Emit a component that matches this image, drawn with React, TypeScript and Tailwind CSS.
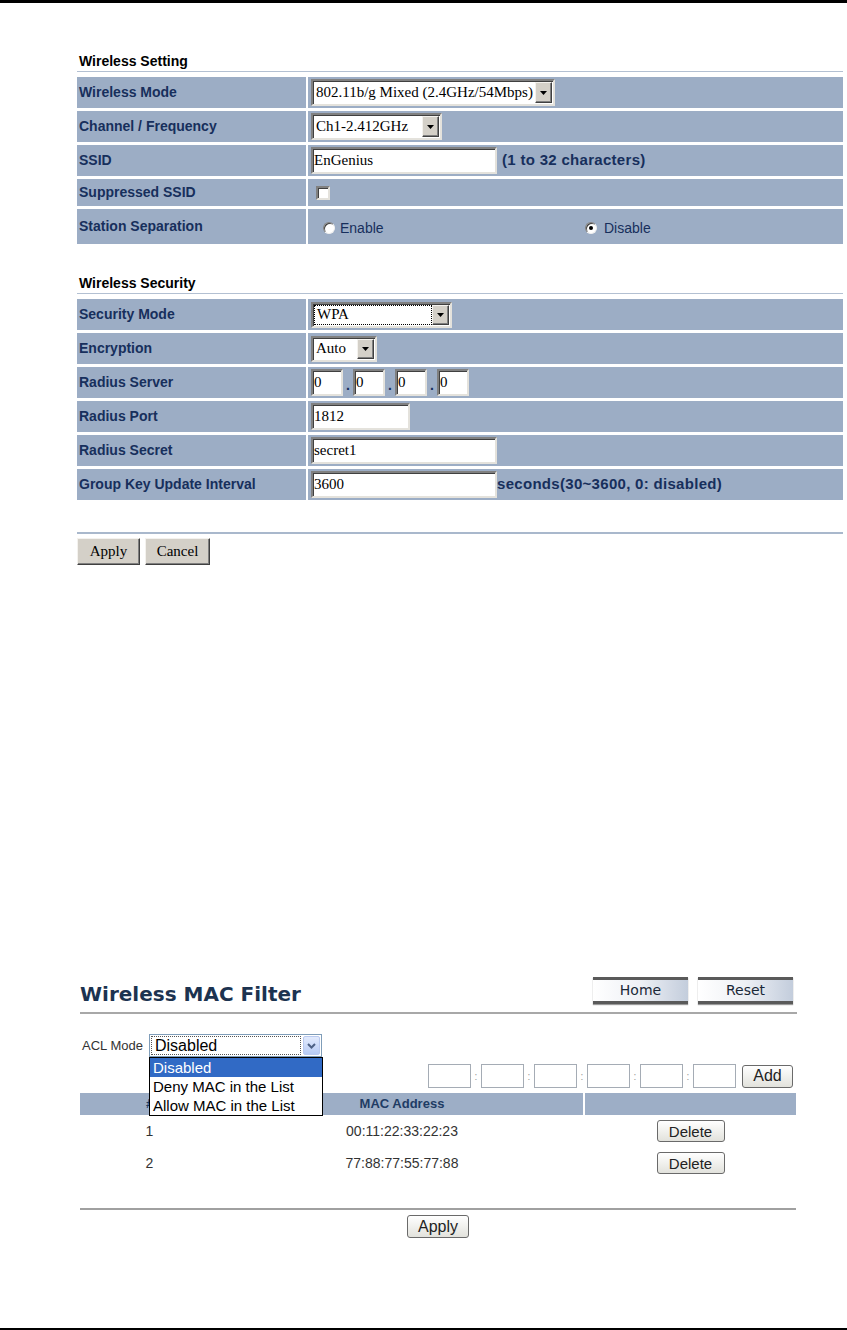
import React from 'react';

const sunken =
  'bg-white border-2 border-t-[#808080] border-l-[#808080] border-r-[#e4e2dc] border-b-[#e4e2dc] shadow-[inset_1px_1px_0_#404040]';
const label = 'bg-[#9cadc5] flex items-center pl-[2px] font-bold text-[14px] text-[#172f5c]';
const value = 'bg-[#9cadc5] flex items-center';
const serif = "font-['Liberation_Serif',serif] text-[15px] text-black";

const DropArrow = () => (
  <span className="flex h-full w-[17px] shrink-0 items-center justify-center bg-[#d4d0c8] border border-t-[#f4f2ee] border-l-[#f4f2ee] border-r-[#404040] border-b-[#404040] shadow-[inset_-1px_-1px_0_#808080]">
    <svg width="7" height="4" viewBox="0 0 7 4">
      <path d="M0 0h7L3.5 4z" fill="#000" />
    </svg>
  </span>
);

const ClassicSelect = ({ text, w, h = 'h-[27px]', focus = false }: { text: string; w: string; h?: string; focus?: boolean }) => (
  <div className={`${sunken} ${w} ${h} flex items-stretch p-[1px]`}>
    <span className={`flex-1 flex items-center pl-[2px] ${serif} ${focus ? 'border border-dotted border-black' : ''}`}>{text}</span>
    <DropArrow />
  </div>
);

const TextBox = ({ text, w }: { text: string; w: string }) => (
  <div className={`${sunken} ${w} h-[27px] flex items-center pl-[1px] ${serif}`}>{text}</div>
);

const Radio = ({ checked }: { checked?: boolean }) => (
  <span className="flex h-[12px] w-[12px] items-center justify-center rounded-full bg-white border border-t-[#808080] border-l-[#808080] border-r-[#f0f0f0] border-b-[#f0f0f0] shadow-[inset_1px_1px_0_#404040]">
    {checked && <span className="h-[4px] w-[4px] rounded-full bg-black" />}
  </span>
);

const Title = ({ children }: { children: React.ReactNode }) => (
  <div className="pl-[2px] pb-[2px] text-[14px] leading-[15px] font-bold text-black border-b border-[#b3c0d2]">{children}</div>
);

const ClassicButton = ({ children, w }: { children: React.ReactNode; w: string }) => (
  <button
    className={`${w} h-[27px] bg-[#d4d0c8] border border-t-[#f4f2ee] border-l-[#f4f2ee] border-r-[#404040] border-b-[#404040] shadow-[inset_-1px_-1px_0_#808080] ${serif}`}
  >
    {children}
  </button>
);

const XPButton = ({ children, w, h = 'h-[22px]' }: { children: React.ReactNode; w: string; h?: string }) => (
  <button className={`${w} ${h} rounded-[3px] border border-[#6a6a6a] bg-gradient-to-b from-white to-[#e2e2dc] text-[15px] text-[#222] leading-none`}>
    {children}
  </button>
);

const NavButton = ({ children }: { children: React.ReactNode }) => (
  <button className="w-[95px] h-[27px] border-t-[3px] border-b-[3px] border-[#5a5a5a] bg-gradient-to-r from-white via-[#eef0f5] to-[#c3cddc] shadow-[0_1px_1px_#9a9a9a] font-['DejaVu_Sans',sans-serif] text-[14px] text-[#1a2838]">
    {children}
  </button>
);

export default function App() {
  return (
    <div className="w-[847px] h-[1330px] flex flex-col bg-white font-['Liberation_Sans',Arial,sans-serif]">
      <div className="h-[3px] bg-black" />

      <div className="ml-[77px] w-[766px]">
        {/* Wireless Setting */}
        <div className="mt-[51px]">
          <Title>Wireless Setting</Title>
        </div>
        <div className="mt-[5px] flex flex-col gap-[3px]">
          <div className="grid grid-cols-[229px_1fr] gap-x-[2px] h-[31px]">
            <div className={label}>Wireless Mode</div>
            <div className={`${value} pl-[3px]`}>
              <ClassicSelect text="802.11b/g Mixed (2.4GHz/54Mbps)" w="w-[244px]" />
            </div>
          </div>
          <div className="grid grid-cols-[229px_1fr] gap-x-[2px] h-[31px]">
            <div className={label}>Channel / Frequency</div>
            <div className={`${value} pl-[3px]`}>
              <ClassicSelect text="Ch1-2.412GHz" w="w-[131px]" />
            </div>
          </div>
          <div className="grid grid-cols-[229px_1fr] gap-x-[2px] h-[31px]">
            <div className={label}>SSID</div>
            <div className={`${value} pl-[3px]`}>
              <TextBox text="EnGenius" w="w-[186px]" />
              <span className="ml-[5px] font-bold text-[15px] tracking-[0.3px] text-[#172f5c]">(1 to 32 characters)</span>
            </div>
          </div>
          <div className="grid grid-cols-[229px_1fr] gap-x-[2px] h-[27px]">
            <div className={label}>Suppressed SSID</div>
            <div className={`${value} pl-[8px]`}>
              <span className={`${sunken} block w-[14px] h-[14px]`} />
            </div>
          </div>
          <div className="grid grid-cols-[229px_1fr] gap-x-[2px] h-[35px]">
            <div className={label}>Station Separation</div>
            <div className={`${value} pl-[15px] text-[14px] text-[#172f5c]`}>
              <span className="w-[262px] flex items-center gap-[5px] pt-[3px]">
                <Radio />
                Enable
              </span>
              <span className="flex items-center gap-[7px] pt-[3px]">
                <Radio checked />
                Disable
              </span>
            </div>
          </div>
        </div>

        {/* Wireless Security */}
        <div className="mt-[32px]">
          <Title>Wireless Security</Title>
        </div>
        <div className="mt-[5px] flex flex-col gap-[3px]">
          <div className="grid grid-cols-[229px_1fr] gap-x-[2px] h-[31px]">
            <div className={label}>Security Mode</div>
            <div className={`${value} pl-[3px]`}>
              <ClassicSelect text="WPA" w="w-[141px]" h="h-[26px]" focus />
            </div>
          </div>
          <div className="grid grid-cols-[229px_1fr] gap-x-[2px] h-[31px]">
            <div className={label}>Encryption</div>
            <div className={`${value} pl-[3px]`}>
              <ClassicSelect text="Auto" w="w-[66px]" h="h-[26px]" />
            </div>
          </div>
          <div className="grid grid-cols-[229px_1fr] gap-x-[2px] h-[31px]">
            <div className={label}>Radius Server</div>
            <div className={`${value} pl-[3px]`}>
              {[0, 1, 2, 3].map((i) => (
                <React.Fragment key={i}>
                  {i > 0 && <span className="w-[10px] text-center font-bold text-[14px] text-[#172f5c] pt-[6px]">.</span>}
                  <TextBox text="0" w="w-[32px]" />
                </React.Fragment>
              ))}
            </div>
          </div>
          <div className="grid grid-cols-[229px_1fr] gap-x-[2px] h-[31px]">
            <div className={label}>Radius Port</div>
            <div className={`${value} pl-[3px]`}>
              <TextBox text="1812" w="w-[99px]" />
            </div>
          </div>
          <div className="grid grid-cols-[229px_1fr] gap-x-[2px] h-[31px]">
            <div className={label}>Radius Secret</div>
            <div className={`${value} pl-[3px]`}>
              <TextBox text="secret1" w="w-[186px]" />
            </div>
          </div>
          <div className="grid grid-cols-[229px_1fr] gap-x-[2px] h-[31px]">
            <div className={label}>Group Key Update Interval</div>
            <div className={`${value} pl-[3px]`}>
              <TextBox text="3600" w="w-[186px]" />
              <span className="font-bold text-[15px] tracking-[0.3px] text-[#172f5c]">seconds(30~3600, 0: disabled)</span>
            </div>
          </div>
        </div>

        <div className="mt-[32px] border-t-2 border-[#a9b8cc]" />
        <div className="mt-[4px] flex gap-[5px]">
          <ClassicButton w="w-[63px]">Apply</ClassicButton>
          <ClassicButton w="w-[65px]">Cancel</ClassicButton>
        </div>
      </div>

      {/* Wireless MAC Filter */}
      <div className="ml-[80px] w-[717px] mt-[412px]">
        <div className="flex justify-between items-start h-[27px] pr-[4px]">
          <h1 className="mt-[5px] font-['DejaVu_Sans',sans-serif] font-bold text-[20px] leading-[24px] text-[#1c3350]">
            Wireless MAC Filter
          </h1>
          <div className="flex gap-[10px]">
            <NavButton>Home</NavButton>
            <NavButton>Reset</NavButton>
          </div>
        </div>
        <div className="mt-[8px] border-t-2 border-[#a8a8a8]" />

        <div className="mt-[20px] flex items-center h-[23px] pl-[2px]">
          <span className="w-[67px] text-[13px] text-[#333]">ACL Mode</span>
          <div className="relative">
            <div className="w-[173px] h-[23px] flex items-stretch border border-[#7f9db9] bg-white p-[1px]">
              <span className="flex-1 flex items-center pl-[3px] text-[16px] text-black border border-dotted border-[#555]">Disabled</span>
              <span className="ml-[2px] w-[17px] flex items-center justify-center rounded-[2px] border border-[#b9c9ef] bg-gradient-to-b from-[#e3ebfd] to-[#b7cbf5]">
                <svg width="9" height="6" viewBox="0 0 9 6">
                  <path d="M1 1l3.5 3.5L8 1" fill="none" stroke="#4d6185" strokeWidth="2" />
                </svg>
              </span>
            </div>
            <div className="absolute left-0 top-[23px] z-10 w-[174px] border border-black bg-white text-[15px] text-black leading-[19px]">
              <div className="bg-[#316ac5] text-white pl-[3px]">Disabled</div>
              <div className="pl-[3px]">Deny MAC in the List</div>
              <div className="pl-[3px]">Allow MAC in the List</div>
            </div>
          </div>
        </div>

        <div className="mt-[7px] flex justify-end items-center h-[24px] pr-[4px]">
          {[0, 1, 2, 3, 4, 5].map((i) => (
            <React.Fragment key={i}>
              {i > 0 && <span className="w-[10px] text-center text-[10px] text-[#999]">:</span>}
              <span className="block w-[43px] h-[24px] border border-[#a5acb5] bg-white" />
            </React.Fragment>
          ))}
          <span className="ml-[6px]">
            <XPButton w="w-[51px]" h="h-[23px]">
              <span className="text-[16px]">Add</span>
            </XPButton>
          </span>
        </div>

        <div className="mt-[5px] w-[716px] grid grid-cols-[139px_362px_1fr] gap-x-[2px] h-[22px] text-[13px] font-bold text-[#1f3c64]">
          <div className="bg-[#9daec6] flex items-center justify-center">#</div>
          <div className="bg-[#9daec6] flex items-center justify-center">MAC Address</div>
          <div className="bg-[#9daec6]" />
        </div>
        {[
          ['1', '00:11:22:33:22:23'],
          ['2', '77:88:77:55:77:88'],
        ].map(([n, mac]) => (
          <div key={n} className="w-[716px] grid grid-cols-[139px_362px_1fr] gap-x-[2px] h-[32px] items-center text-[14px] text-[#333]">
            <div className="text-center">{n}</div>
            <div className="text-center">{mac}</div>
            <div className="flex justify-center">
              <XPButton w="w-[68px]">Delete</XPButton>
            </div>
          </div>
        ))}

        <div className="mt-[29px] w-[716px] border-t-2 border-[#a0a0a0]" />
        <div className="mt-[5px] w-[716px] flex justify-center">
          <XPButton w="w-[62px]" h="h-[23px]">
            <span className="text-[16px]">Apply</span>
          </XPButton>
        </div>
      </div>

      <div className="mt-auto h-[2px] bg-black" />
    </div>
  );
}
